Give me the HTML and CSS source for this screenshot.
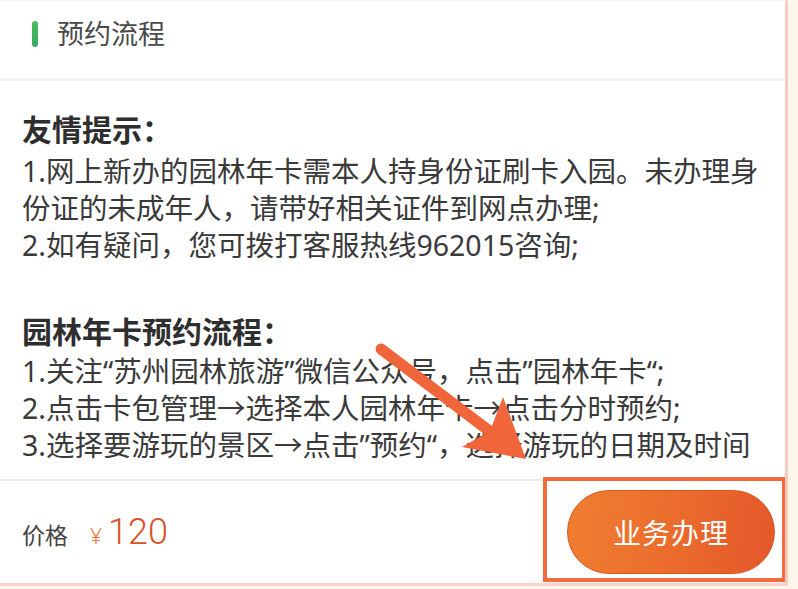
FILE: index.html
```html
<!DOCTYPE html>
<html lang="zh-CN">

<head>
    <meta charset="UTF-8" />
    <meta name="viewport" content="width=device-width, initial-scale=1" />
    <title>预约流程</title>
    <link rel="stylesheet" href="styles.css">
</head>

<body>

    <div class="panel">
        <div class="section-head">
            <span class="head-bar"></span>
            <h2>预约流程</h2>
        </div>

        <div class="content">
            <h3>友情提示：</h3>
            <p>1.网上新办的园林年卡需本人持身份证刷卡入园。未办理身份证的未成年人，请带好相关证件到网点办理;</p>
            <p>2.如有疑问，您可拨打客服热线962015咨询;</p>

            <h3 class="next">园林年卡预约流程：</h3>
            <p>1.关注“苏州园林旅游”微信公众号，点击”园林年卡“;</p>
            <p>2.点击卡包管理→选择本人园林年卡→点击分时预约;</p>
            <p>3.选择要游玩的景区→点击”预约“，选择游玩的日期及时间</p>
        </div>

        <div class="footer">
            <div class="price">
                <span class="price-label">价格</span>
                <span class="yen">¥</span>
                <span class="amount">120</span>
            </div>
            <button class="btn-apply">业务办理</button>
        </div>

        <!-- annotation marks -->
        <div class="mark-box"></div>
        <svg class="mark-arrow" width="785" height="582" viewBox="0 0 785 582">
            <line x1="381" y1="348" x2="496" y2="435" stroke="#f0653a" stroke-width="11" stroke-linecap="round" />
            <polygon points="526,458 462,446 490,430 503,396" fill="#f0653a" />
        </svg>
    </div>

</body>

</html>
```

FILE: styles.css
```css
body {
    margin: 0;
    background: #fdf6eb;
    font-family: "Noto Sans", "Noto Sans CJK SC", sans-serif;
    color: #383838;
}

.panel {
    position: relative;
    width: 785px;
    height: 582px;
    background: #fff;
    border-right: 3px solid #f8cbc2;
    border-bottom: 3px solid #f9d3cb;
    border-top: 1px solid #f4f4f4;
    box-sizing: content-box;
    display: flex;
    flex-direction: column;
    overflow: hidden;
}

.section-head {
    height: 80px;
    display: flex;
    align-items: center;
    gap: 19px;
    padding-left: 32px;
    padding-bottom: 12px;
    box-sizing: border-box;
    border-bottom: 3px solid #f3f3f3;
    flex-shrink: 0;
}

.head-bar {
    width: 6px;
    height: 26px;
    border-radius: 3px;
    background: linear-gradient(180deg, #4cbc62, #3aa860);
}

.section-head h2 {
    margin: 0;
    font-size: 27px;
    font-weight: 400;
    color: #4a4a4a;
    line-height: 1;
}

.content {
    flex: 1;
    overflow: hidden;
    padding: 30px 22px 0 22px;
}

.content h3 {
    margin: 0 0 5px;
    font-size: 30px;
    line-height: 37px;
    font-weight: 700;
    color: #2e2e2e;
}

.content h3.next {
    margin-top: 49px;
    margin-bottom: 3px;
}

.content p {
    margin: 0;
    font-size: 28.5px;
    line-height: 37px;
    color: #3a3a3a;
}

.footer {
    height: 102px;
    border-top: 2px solid #ebebeb;
    display: flex;
    align-items: center;
    justify-content: space-between;
    padding: 0 10px 0 22px;
    flex-shrink: 0;
}

.price {
    display: flex;
    align-items: baseline;
}

.price-label {
    font-size: 23px;
    color: #454545;
    margin-right: 22px;
}

.yen {
    font-size: 21px;
    font-weight: 300;
    color: #ea7a45;
    margin-right: 6px;
}

.amount {
    font-family: Roboto, "Liberation Sans", sans-serif;
    font-weight: 300;
    font-size: 36px;
    color: #d8532b;
}

.btn-apply {
    width: 208px;
    height: 84px;
    border-radius: 42px;
    border: 1px solid #d9561f;
    background: linear-gradient(100deg, #f07f31, #ea6a2c 55%, #e4572a);
    color: #fff;
    font-family: "Noto Sans CJK SC", sans-serif;
    font-size: 28px;
    letter-spacing: 1px;
    cursor: pointer;
}

.mark-box {
    position: absolute;
    left: 543px;
    top: 476px;
    width: 243px;
    height: 105px;
    border: 4px solid #f36b3b;
    box-sizing: border-box;
    pointer-events: none;
}

.mark-arrow {
    position: absolute;
    left: 0;
    top: 0;
    pointer-events: none;
}
```
